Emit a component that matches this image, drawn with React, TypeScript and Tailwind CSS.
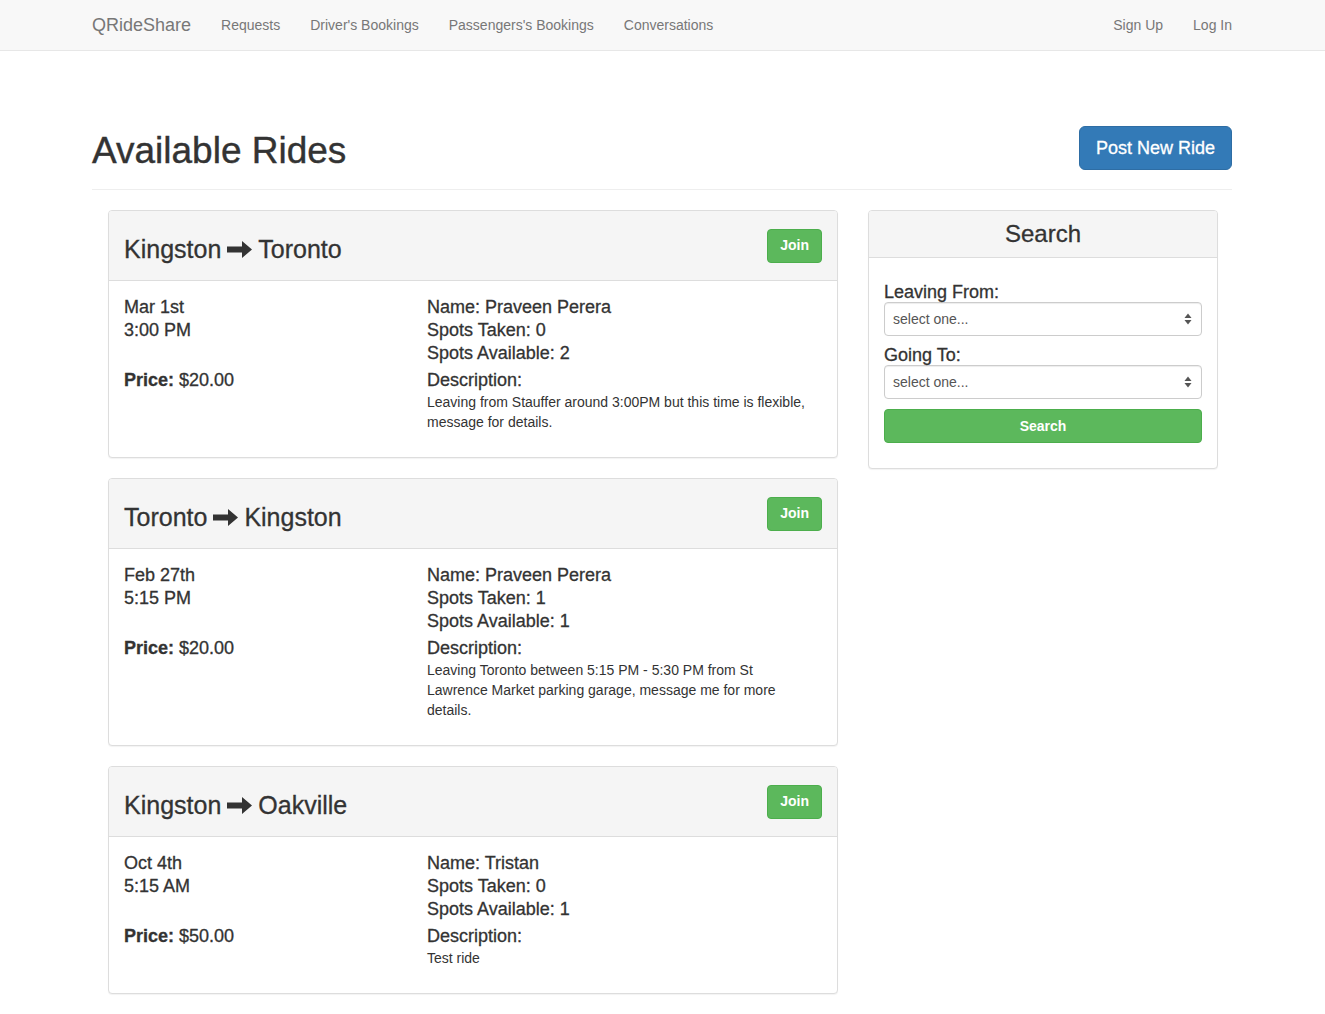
import React from "react";

interface Ride {
  from: string;
  to: string;
  date: string;
  time: string;
  price: string;
  name: string;
  taken: number;
  available: number;
  description: string;
}

const RIDES: Ride[] = [
  {
    from: "Kingston",
    to: "Toronto",
    date: "Mar 1st",
    time: "3:00 PM",
    price: "$20.00",
    name: "Praveen Perera",
    taken: 0,
    available: 2,
    description: "Leaving from Stauffer around 3:00PM but this time is flexible, message for details.",
  },
  {
    from: "Toronto",
    to: "Kingston",
    date: "Feb 27th",
    time: "5:15 PM",
    price: "$20.00",
    name: "Praveen Perera",
    taken: 1,
    available: 1,
    description:
      "Leaving Toronto between 5:15 PM - 5:30 PM from St Lawrence Market parking garage, message me for more details.",
  },
  {
    from: "Kingston",
    to: "Oakville",
    date: "Oct 4th",
    time: "5:15 AM",
    price: "$50.00",
    name: "Tristan",
    taken: 0,
    available: 1,
    description: "Test ride",
  },
];

const NAV_LINKS = ["Requests", "Driver's Bookings", "Passengers's Bookings", "Conversations"];

function ArrowRight() {
  return (
    <svg width="25" height="17" viewBox="0 0 25 17" className="mx-[6px] inline-block" fill="#333">
      <path d="M0 5.5h15V0l10 8.5-10 8.5v-5.5H0z" />
    </svg>
  );
}

function SelectArrows() {
  return (
    <svg width="8" height="12" viewBox="0 0 8 12" fill="#555">
      <path d="M4 0.5L7.5 5H0.5z" />
      <path d="M4 11.5L0.5 7h7z" />
    </svg>
  );
}

function RidePanel({ ride }: { ride: Ride }) {
  return (
    <div className="mb-[20px] rounded-[4px] border border-[#ddd] bg-white shadow-[0_1px_1px_rgba(0,0,0,0.05)]">
      <div className="flex h-[70px] items-center justify-between rounded-t-[3px] border-b border-[#ddd] bg-[#f5f5f5] px-[15px]">
        <h3 className="mt-[7px] flex items-center text-[25px] leading-[26px] text-[#333] [-webkit-text-stroke:0.3px_#333]">
          {ride.from}
          <ArrowRight />
          {ride.to}
        </h3>
        <button className="h-[34px] rounded-[4px] border border-[#4cae4c] bg-[#5cb85c] px-[12px] text-[14px] font-bold text-white">
          Join
        </button>
      </div>
      <div className="grid grid-cols-[303px_1fr] px-[15px] pb-[25px] pt-[15px] text-[18px] leading-[23px] text-[#333] [-webkit-text-stroke:0.3px_#333]">
        <div>
          <div>{ride.date}</div>
          <div>{ride.time}</div>
        </div>
        <div>
          <div>Name: {ride.name}</div>
          <div>Spots Taken: {ride.taken}</div>
          <div>Spots Available: {ride.available}</div>
        </div>
        <div className="mt-[4px]">
          <span className="font-bold">Price:</span> {ride.price}
        </div>
        <div className="mt-[4px]">
          <div>Description:</div>
          <p className="w-[385px] text-[14px] leading-[20px] [-webkit-text-stroke:0px]">{ride.description}</p>
        </div>
      </div>
    </div>
  );
}

function SearchPanel() {
  return (
    <div className="rounded-[4px] border border-[#ddd] bg-white shadow-[0_1px_1px_rgba(0,0,0,0.05)]">
      <div className="flex h-[47px] items-center justify-center rounded-t-[3px] border-b border-[#ddd] bg-[#f5f5f5]">
        <h3 className="text-[24px] leading-[26px] text-[#333] [-webkit-text-stroke:0.3px_#333]">Search</h3>
      </div>
      <div className="px-[15px] pb-[25px] pt-[24px] text-[#333]">
        <label className="block text-[18px] leading-[20px] [-webkit-text-stroke:0.3px_#333]">Leaving From:</label>
        <div className="flex h-[34px] items-center justify-between rounded-[4px] border border-[#ccc] bg-white pl-[8px] pr-[9px] text-[14px] text-[#555] shadow-[inset_0_1px_1px_rgba(0,0,0,0.075)]">
          <span>select one...</span>
          <SelectArrows />
        </div>
        <label className="mt-[9px] block text-[18px] leading-[20px] [-webkit-text-stroke:0.3px_#333]">Going To:</label>
        <div className="flex h-[34px] items-center justify-between rounded-[4px] border border-[#ccc] bg-white pl-[8px] pr-[9px] text-[14px] text-[#555] shadow-[inset_0_1px_1px_rgba(0,0,0,0.075)]">
          <span>select one...</span>
          <SelectArrows />
        </div>
        <button className="mt-[10px] h-[34px] w-full rounded-[4px] border border-[#4cae4c] bg-[#5cb85c] text-[14px] font-bold text-white">
          Search
        </button>
      </div>
    </div>
  );
}

export default function App() {
  return (
    <div
      className="min-h-screen bg-white text-[#333]"
      style={{ fontFamily: '"Liberation Sans", Arial, Helvetica, sans-serif' }}
    >
      <nav className="h-[51px] border-b border-[#e7e7e7] bg-[#f8f8f8]">
        <div className="ml-[92px] flex h-[50px] w-[1140px] items-center justify-between text-[#777]">
          <div className="flex items-center">
            <span className="pr-[15px] text-[18px]">QRideShare</span>
            {NAV_LINKS.map((l) => (
              <span key={l} className="px-[15px] text-[14px]">
                {l}
              </span>
            ))}
          </div>
          <div className="flex items-center text-[14px]">
            <span className="px-[15px]">Sign Up</span>
            <span className="pl-[15px]">Log In</span>
          </div>
        </div>
      </nav>

      <div className="ml-[92px] w-[1140px]">
        <div className="mt-[75px] flex items-start justify-between border-b border-[#eee] pb-[18px]">
          <h1 className="mt-[5px] text-[37px] leading-[40px] text-[#333] [-webkit-text-stroke:0.4px_#333]">
            Available Rides
          </h1>
          <button className="h-[44px] rounded-[6px] border border-[#2e6da4] bg-[#337ab7] px-[16px] text-[18px] text-white [-webkit-text-stroke:0.3px_#fff]">
            Post New Ride
          </button>
        </div>

        <div className="mt-[20px] flex items-start">
          <div className="ml-[16px] w-[730px]">
            {RIDES.map((r, i) => (
              <RidePanel key={i} ride={r} />
            ))}
          </div>
          <div className="ml-[30px] w-[350px]">
            <SearchPanel />
          </div>
        </div>
      </div>
    </div>
  );
}
